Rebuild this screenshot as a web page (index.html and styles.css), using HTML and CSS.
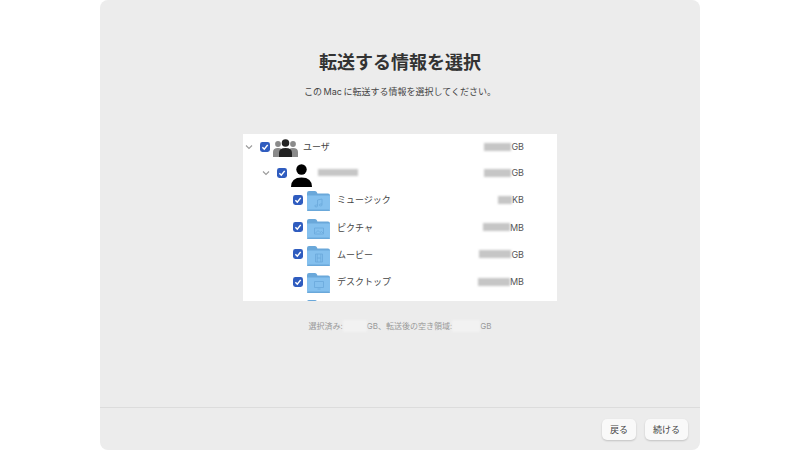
FILE: index.html
```html
<!DOCTYPE html>
<html lang="ja">
  <head>
    <meta charset="UTF-8" />
    <title>転送する情報を選択</title>
    <link rel="stylesheet" href="styles.css">
  </head>
  <body>
    <!-- shared icons -->
    <svg class="defs" width="0" height="0">
      <symbol id="chevron" viewBox="0 0 8 6">
        <path d="M1 1.5 L4 4.5 L7 1.5" fill="none" stroke="#9a9a9a" stroke-width="1.1" />
      </symbol>
      <symbol id="check" viewBox="0 0 10 10">
        <rect width="10" height="10" rx="2.4" fill="#2f5cbf" />
        <path d="M2.4 5.2 L4.3 7.2 L7.7 2.9" fill="none" stroke="#fff" stroke-width="1.5" />
      </symbol>
      <symbol id="folder" viewBox="0 0 23 20">
        <path d="M0 2 Q0 0 2 0 H8 Q9.5 0 10 1.5 L10.4 2.5 H21 Q23 2.5 23 4.5 V8 H0 Z" fill="#6aa8da" />
        <path d="M0 4.5 H23 V18 Q23 20 21 20 H2 Q0 20 0 18 Z" fill="#84c0ee" />
        <rect y="18.6" width="23" height="1.4" rx="0.7" fill="#6aa8da" />
      </symbol>
    </svg>

    <main class="window">
      <h1>転送する情報を選択</h1>
      <p class="lead">この Mac に転送する情報を選択してください。</p>

      <div class="list">
        <div class="row">
          <svg class="chevron"><use href="#chevron" /></svg>
          <svg class="check"><use href="#check" /></svg>
          <svg class="group-icon" viewBox="0 0 25 19">
            <g fill="#8a8a8a">
              <circle cx="5" cy="5" r="2.9" />
              <circle cx="20" cy="5" r="2.9" />
              <path d="M0 18 V13 Q0 9 5 9 Q10 9 10 13 V18 Z" />
              <path d="M15 18 V13 Q15 9 20 9 Q25 9 25 13 V18 Z" />
            </g>
            <g fill="#222">
              <circle cx="12.5" cy="4" r="3.8" />
              <path d="M6 18 V14 Q6 9 12.5 9 Q19 9 19 14 V18 Z" />
            </g>
          </svg>
          <span class="name">ユーザ</span>
          <span class="size"><i class="mask w27"></i>GB</span>
        </div>

        <div class="row level-1">
          <svg class="chevron"><use href="#chevron" /></svg>
          <svg class="check"><use href="#check" /></svg>
          <svg class="person-icon" viewBox="0 0 21 23">
            <circle cx="10.5" cy="5.5" r="5.2" fill="#000" />
            <path d="M0 23 Q0 13.5 10.5 13.5 Q21 13.5 21 23 Z" fill="#000" />
          </svg>
          <i class="mask name-mask"></i>
          <span class="size"><i class="mask w27"></i>GB</span>
        </div>

        <div class="row level-2">
          <svg class="check"><use href="#check" /></svg>
          <span class="folder">
            <svg><use href="#folder" /></svg>
            <svg class="glyph" viewBox="0 0 10 10"><path d="M3.5 8 V2 L8 1 V7 M3.5 8 a1.3 1 0 1 1 -1 -1 h1 M8 7 a1.3 1 0 1 1 -1 -1 h1" /></svg>
          </span>
          <span class="name">ミュージック</span>
          <span class="size"><i class="mask w14"></i>KB</span>
        </div>

        <div class="row level-2">
          <svg class="check"><use href="#check" /></svg>
          <span class="folder">
            <svg><use href="#folder" /></svg>
            <svg class="glyph" viewBox="0 0 10 10"><path d="M0.5 2 H9.5 V8 H0.5 Z M1.5 7 L4 4.5 L6 6.5 L7.5 5.5 L9 7" /></svg>
          </span>
          <span class="name">ピクチャ</span>
          <span class="size"><i class="mask w27"></i>MB</span>
        </div>

        <div class="row level-2">
          <svg class="check"><use href="#check" /></svg>
          <span class="folder">
            <svg><use href="#folder" /></svg>
            <svg class="glyph" viewBox="0 0 10 10"><path d="M1.5 1 H8.5 V9 H1.5 Z M3.2 1 V9 M6.8 1 V9 M3.2 5 H6.8" /></svg>
          </span>
          <span class="name">ムービー</span>
          <span class="size"><i class="mask w32"></i>GB</span>
        </div>

        <div class="row level-2">
          <svg class="check"><use href="#check" /></svg>
          <span class="folder">
            <svg><use href="#folder" /></svg>
            <svg class="glyph" viewBox="0 0 10 10"><path d="M0.5 1.5 H9.5 V7.5 H0.5 Z M3.5 9 H6.5" /></svg>
          </span>
          <span class="name">デスクトップ</span>
          <span class="size"><i class="mask w32"></i>MB</span>
        </div>

        <div class="row level-2">
          <svg class="check hidden"><use href="#check" /></svg>
          <span class="folder"><svg><use href="#folder" /></svg></span>
        </div>
      </div>

      <p class="status">選択済み:<i class="mask status-mask"></i>GB、転送後の空き領域:<i class="mask status-mask wide"></i>GB</p>

      <footer class="footer">
        <button type="button">戻る</button>
        <button type="button">続ける</button>
      </footer>
    </main>
  </body>
</html>
```

FILE: styles.css
```css
/* Basic styling */
* {
  margin: 0;
  padding: 0;
  box-sizing: border-box;
}
body {
  background-color: #fff;
  color: #333;
  font-family: Inter, "Noto Sans CJK JP", sans-serif;
}
.defs {
  display: block;
  height: 0;
}
.window {
  display: flex;
  flex-direction: column;
  align-items: center;
  width: 600px;
  height: 450px;
  margin: 0 auto;
  padding-top: 51px;
  background-color: #ececec;
  border-radius: 8px;
  overflow: hidden;
}
h1 {
  font-size: 18px;
  line-height: 24px;
  font-weight: 700;
  color: #333;
}
.lead {
  margin-top: 11px;
  font-size: 9px;
  line-height: 12px;
  word-spacing: -1px;
  color: #444;
}

/* File list */
.list {
  width: 314px;
  height: 167px;
  margin-top: 36px;
  background-color: #fff;
  overflow: hidden;
}
.row {
  display: flex;
  align-items: center;
  height: 27.25px;
  font-size: 9px;
  color: #444;
}
.row:first-child {
  height: 25px;
}
.level-1 {
  padding-left: 17px;
}
.level-2 {
  padding-left: 50px;
}
.chevron {
  width: 8px;
  height: 6px;
  margin: 0 7px 0 2px;
  flex: none;
}
.check {
  width: 10px;
  height: 10px;
  flex: none;
}
.hidden {
  visibility: hidden;
}
.group-icon {
  width: 25px;
  height: 19px;
  margin: 4px 0 0 3px;
  flex: none;
}
.person-icon {
  width: 21px;
  height: 23px;
  margin: 5px 0 0 4px;
  flex: none;
}
.folder {
  display: flex;
  align-items: center;
  justify-content: center;
  position: relative;
  width: 23px;
  height: 20px;
  margin: 3px 0 0 4px;
  flex: none;
}
.folder svg {
  width: 23px;
  height: 20px;
}
.folder .glyph {
  position: absolute;
  top: 7px;
  left: 6.5px;
  width: 10px;
  height: 10px;
  fill: none;
  stroke: #6aa8da;
  stroke-width: 0.8;
}
.name {
  margin-left: 5px;
}
.level-2 .name {
  margin-left: 7px;
}
.size {
  display: flex;
  align-items: center;
  margin-left: auto;
  padding-right: 33px;
  color: #555;
}

/* Blurred-out values */
.mask {
  display: inline-block;
  height: 8px;
  background-color: #c6c6c6;
  filter: blur(0.8px);
}
.w14 {
  width: 14px;
}
.w27 {
  width: 27px;
}
.w32 {
  width: 32px;
}
.name-mask {
  width: 40px;
  height: 7px;
  margin-left: 6px;
}
.status {
  display: flex;
  align-items: center;
  margin-top: 19px;
  font-size: 8px;
  line-height: 12px;
  color: #999;
}
.status-mask {
  width: 24px;
  height: 12px;
  background-color: #f2f2f2;
}
.status-mask.wide {
  width: 28px;
}

/* Bottom bar */
.footer {
  display: flex;
  justify-content: flex-end;
  gap: 9px;
  width: 100%;
  margin-top: auto;
  height: 43px;
  padding: 11px 12px 0 0;
  border-top: 1px solid #dcdcdc;
}
button {
  height: 21px;
  padding: 0 8px;
  font-family: inherit;
  font-size: 9px;
  color: #444;
  background-color: #f9f9f9;
  border: none;
  border-radius: 5px;
  box-shadow: 0 1px 2px rgba(0, 0, 0, 0.18);
}
```
